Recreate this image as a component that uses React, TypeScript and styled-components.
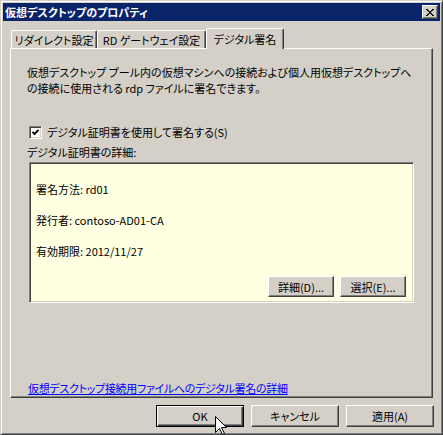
import * as React from "react";
import styled, { createGlobalStyle } from "styled-components";

const GlobalStyle = createGlobalStyle`
  html, body {
    margin: 0;
    padding: 0;
    background: #d4d0c8;
  }
  body {
    font-family: "Noto Sans CJK JP", "Liberation Sans", sans-serif;
    font-size: 11px;
    color: #000;
    font-feature-settings: "palt";
  }
`;

const Window = styled.div`
  position: relative;
  width: 443px;
  height: 435px;
  box-sizing: border-box;
  background: #d4d0c8;
  border: 1px solid;
  border-color: #d4d0c8 #404040 #404040 #d4d0c8;
  box-shadow: inset 1px 1px 0 #fff, inset -1px -1px 0 #808080;
  padding: 2px;
  display: flex;
  flex-direction: column;
`;

const TitleBar = styled.div`
  height: 18px;
  background: #0a246a;
  color: #fff;
  font-weight: bold;
  font-size: 11px;
  display: flex;
  align-items: center;
  justify-content: space-between;
  padding: 0 2px 0 2px;
  white-space: nowrap;
`;

const CloseButton = styled.div`
  width: 16px;
  height: 14px;
  box-sizing: border-box;
  background: #d4d0c8;
  border: 1px solid;
  border-color: #fff #404040 #404040 #fff;
  box-shadow: inset -1px -1px 0 #808080;
  display: flex;
  align-items: center;
  justify-content: center;
`;

const Body = styled.div`
  display: flex;
  flex-direction: column;
  padding: 7px 7px 0 7px;
`;

const TabStrip = styled.div`
  display: flex;
  align-items: flex-end;
  height: 20px;
  padding-left: 1px;
  position: relative;
  z-index: 1;
`;

const Tab = styled.div<{ $w: number; $active?: boolean }>`
  width: ${(p) => p.$w}px;
  height: ${(p) => (p.$active ? 21 : 18)}px;
  margin-bottom: ${(p) => (p.$active ? -1 : 0)}px;
  box-sizing: border-box;
  background: #d4d0c8;
  border-top: 1px solid #fff;
  border-left: 1px solid #fff;
  border-right: 1px solid #404040;
  border-radius: 2px 2px 0 0;
  box-shadow: inset -1px 0 0 #808080;
  display: flex;
  align-items: center;
  justify-content: center;
  padding-top: ${(p) => (p.$active ? 0 : 1)}px;
  white-space: nowrap;
`;

const Panel = styled.div`
  height: 350px;
  box-sizing: border-box;
  border: 1px solid;
  border-color: #fff #404040 #404040 #fff;
  box-shadow: inset -1px -1px 0 #808080;
  display: flex;
  flex-direction: column;
  padding: 15px 0 2px 0;
`;

const Paragraph = styled.p`
  margin: 0 0 0 16px;
  line-height: 16px;
  white-space: nowrap;
`;

const Text = styled.div<{ $top?: number }>`
  margin: ${(p) => p.$top ?? 0}px 0 0 16px;
  line-height: 13px;
  white-space: nowrap;
`;

const CheckRow = styled.label`
  display: flex;
  align-items: center;
  gap: 5px;
  margin: 30px 0 0 18px;
  line-height: 13px;
  white-space: nowrap;
`;

const CheckBox = styled.span`
  width: 13px;
  height: 13px;
  box-sizing: border-box;
  background: #fff;
  border: 1px solid;
  border-color: #808080 #fff #fff #808080;
  box-shadow: inset 1px 1px 0 #404040, inset -1px -1px 0 #d4d0c8;
  display: flex;
  align-items: center;
  justify-content: center;
`;

const DetailBox = styled.div`
  width: 385px;
  height: 141px;
  box-sizing: border-box;
  margin: 3px 0 0 18px;
  background: #ffffe1;
  border: 1px solid;
  border-color: #808080 #fff #fff #808080;
  box-shadow: inset 1px 1px 0 #404040, inset -1px -1px 0 #d4d0c8;
  display: flex;
  flex-direction: column;
  padding: 20px 7px 6px 6px;
`;

const InfoLine = styled.div`
  line-height: 13px;
  height: 13px;
  margin-bottom: 18px;
  white-space: nowrap;
`;

const BoxButtons = styled.div`
  margin-top: auto;
  display: flex;
  justify-content: flex-end;
  gap: 6px;
`;

const Button = styled.div<{ $w: number; $h: number; $default?: boolean }>`
  width: ${(p) => p.$w}px;
  height: ${(p) => p.$h}px;
  box-sizing: border-box;
  background: #d4d0c8;
  border: 1px solid;
  border-color: ${(p) =>
    p.$default ? "#000" : "#fff #404040 #404040 #fff"};
  box-shadow: ${(p) =>
    p.$default
      ? "inset 1px 1px 0 #fff, inset -1px -1px 0 #404040, inset -2px -2px 0 #808080"
      : "inset -1px -1px 0 #808080"};
  display: flex;
  align-items: center;
  justify-content: center;
  white-space: nowrap;
`;

const Link = styled.a`
  margin: auto 0 0 17px;
  line-height: 13px;
  color: #0000ff;
  text-decoration: underline;
  letter-spacing: -0.3px;
  white-space: nowrap;
  cursor: pointer;
`;

const ButtonRow = styled.div`
  display: flex;
  justify-content: flex-end;
  gap: 7px;
  margin: 7px -1px 0 0;
`;

const Cursor = styled.svg`
  position: absolute;
  left: 214px;
  top: 415px;
`;

export default function App() {
  return (
    <>
      <GlobalStyle />
      <Window>
        <TitleBar>
          <span>仮想デスクトップのプロパティ</span>
          <CloseButton>
            <svg width="8" height="7" viewBox="0 0 8 7">
              <path d="M0 0 L8 7 M1 0 L7 7 M8 0 L0 7 M7 0 L1 7" stroke="#000" strokeWidth="1" />
            </svg>
          </CloseButton>
        </TitleBar>
        <Body>
          <TabStrip>
            <Tab $w={86}>リダイレクト設定</Tab>
            <Tab $w={109}>RD ゲートウェイ設定</Tab>
            <Tab $w={78} $active>
              デジタル署名
            </Tab>
          </TabStrip>
          <Panel>
            <Paragraph>
              仮想デスクトップ プール内の仮想マシンへの接続および個人用仮想デスクトップへ
              <br />
              の接続に使用される rdp ファイルに署名できます。
            </Paragraph>
            <CheckRow>
              <CheckBox>
                <svg width="7" height="7" viewBox="0 0 7 7">
                  <path d="M0.5 3 L2.5 5 L6.5 1" stroke="#000" strokeWidth="1.8" fill="none" />
                </svg>
              </CheckBox>
              デジタル証明書を使用して署名する(S)
            </CheckRow>
            <Text $top={7}>デジタル証明書の詳細:</Text>
            <DetailBox>
              <InfoLine>署名方法: rd01</InfoLine>
              <InfoLine>発行者: contoso-AD01-CA</InfoLine>
              <InfoLine>有効期限: 2012/11/27</InfoLine>
              <BoxButtons>
                <Button $w={66} $h={21}>詳細(D)...</Button>
                <Button $w={66} $h={21}>選択(E)...</Button>
              </BoxButtons>
            </DetailBox>
            <Link>仮想デスクトップ接続用ファイルへのデジタル署名の詳細</Link>
          </Panel>
          <ButtonRow>
            <Button $w={88} $h={22} $default>
              OK
            </Button>
            <Button $w={88} $h={22}>キャンセル</Button>
            <Button $w={88} $h={22}>適用(A)</Button>
          </ButtonRow>
        </Body>
        <Cursor width="13" height="20" viewBox="0 0 13 20">
          <path
            d="M0.5 0.5 L0.5 16.5 L4.5 12.5 L7.5 18.5 L9.5 17.5 L6.5 11.5 L11.5 11.5 Z"
            fill="#fff"
            stroke="#000"
            strokeWidth="1"
          />
        </Cursor>
      </Window>
    </>
  );
}
